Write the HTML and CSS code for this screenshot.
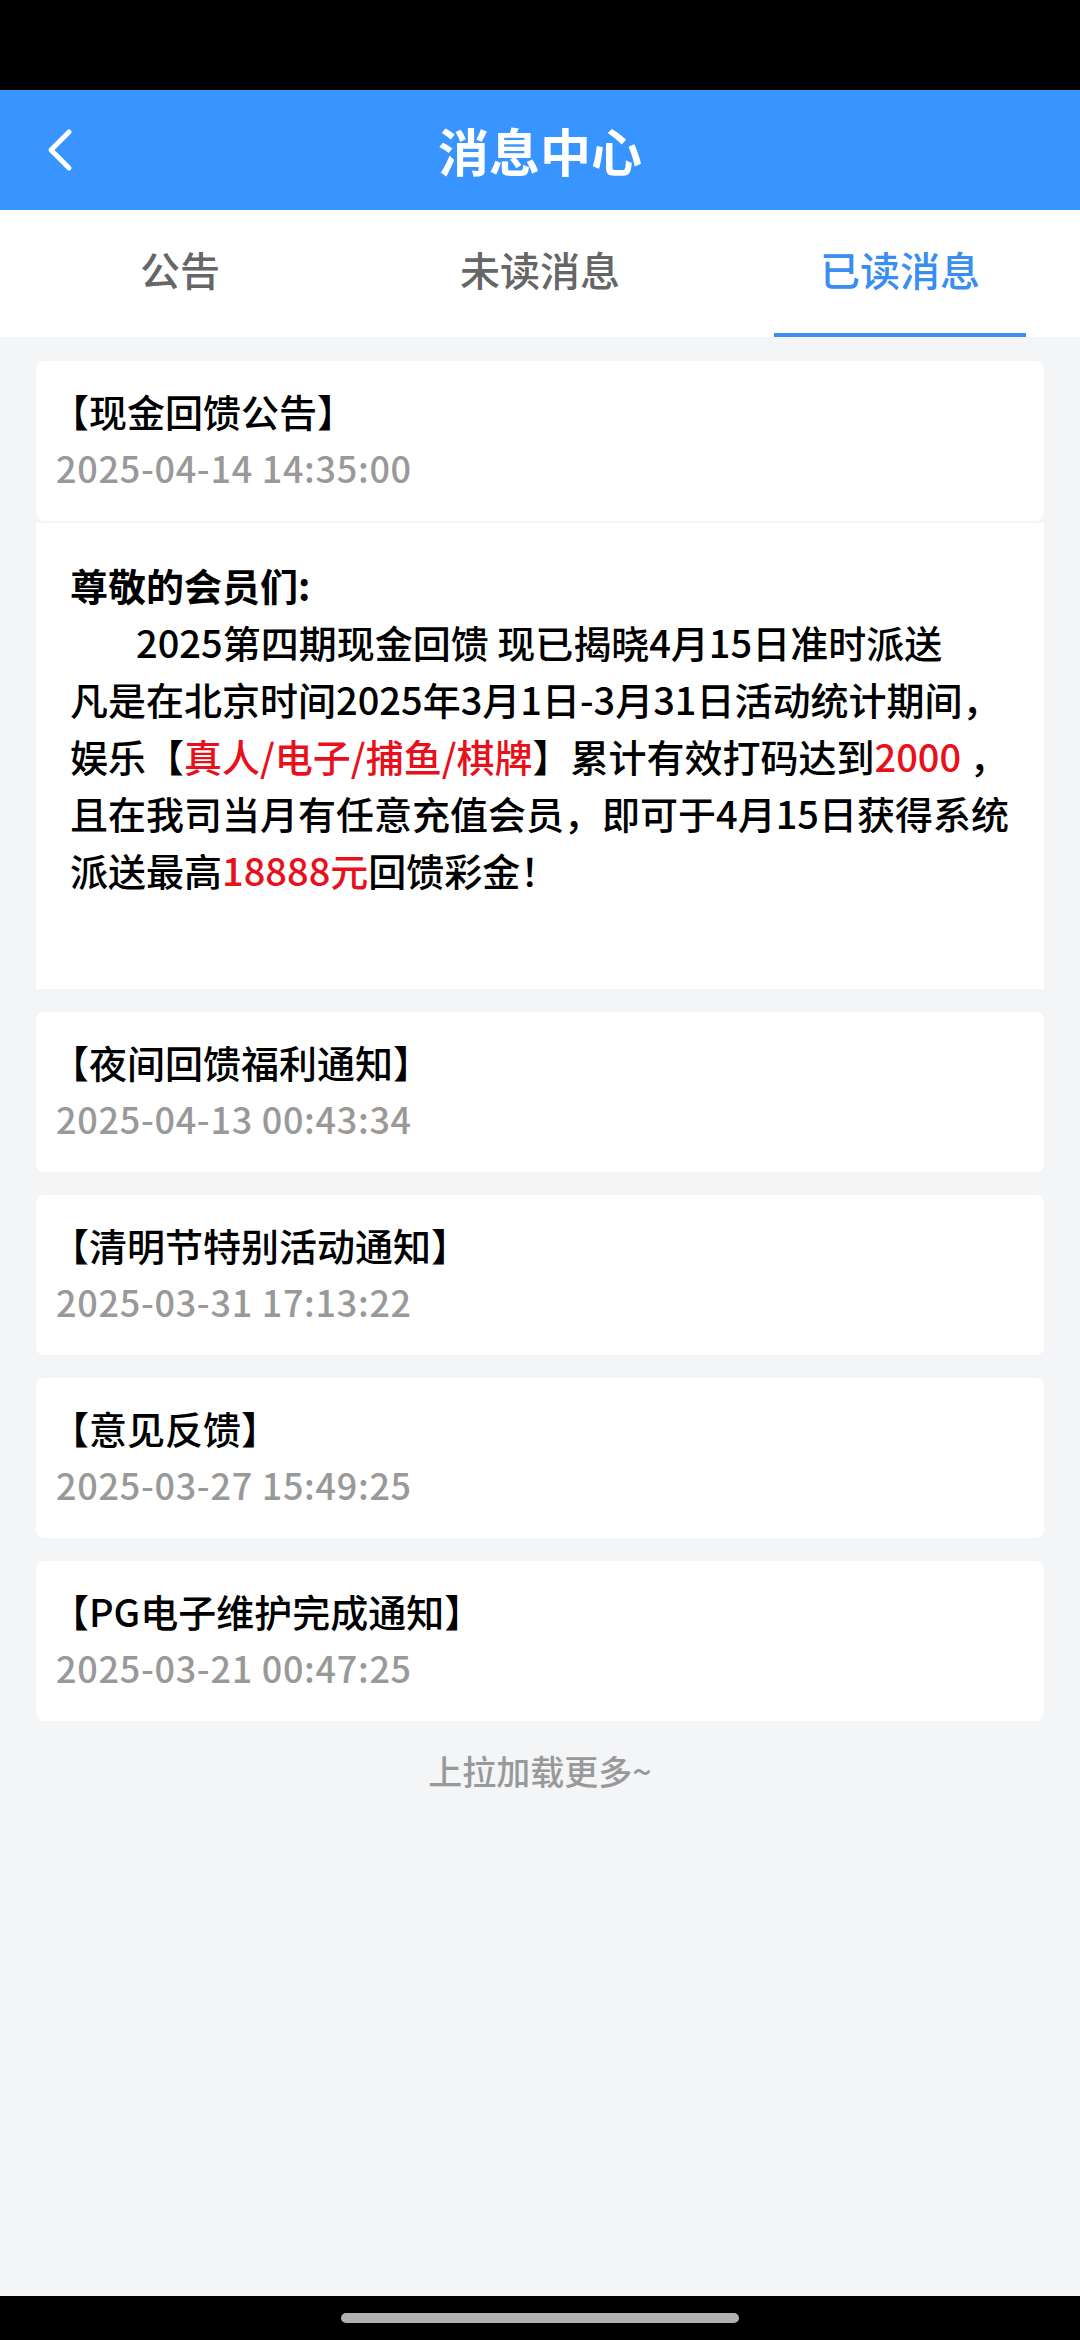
FILE: index.html
```html
<!DOCTYPE html>
<html lang="zh-CN">
<head>
<meta charset="utf-8">
<title>消息中心</title>
<link rel="stylesheet" href="styles.css">
</head>
<body>
<div class="page">
  <div class="statusbar"></div>
  <header class="header">
    <div class="back">
      <svg width="32" height="46" viewBox="0 0 32 46"><polyline points="25,5 7,23 25,41" fill="none" stroke="#ffffff" stroke-width="5" stroke-linecap="round" stroke-linejoin="round"/></svg>
    </div>
    <h1 class="title">消息中心</h1>
    <div class="spacer"></div>
  </header>
  <nav class="tabs">
    <div class="tab"><span class="tab-label">公告</span><span class="tab-line"></span></div>
    <div class="tab"><span class="tab-label">未读消息</span><span class="tab-line"></span></div>
    <div class="tab active"><span class="tab-label">已读消息</span><span class="tab-line"></span></div>
  </nav>
  <main class="list">
    <section class="card open">
      <div class="card-head">
        <div class="card-title">【现金回馈公告】</div>
        <div class="card-date">2025-04-14 14:35:00</div>
      </div>
      <div class="card-body">
        <div class="greet">尊敬的会员们:</div>
        <div class="line indent">2025第四期现金回馈 现已揭晓4月15日准时派送</div>
        <div class="line">凡是在北京时间2025年3月1日-3月31日活动统计期间，</div>
        <div class="line">娱乐【<span class="red">真人/电子/捕鱼/棋牌</span>】累计有效打码达到<span class="red">2000</span> ，</div>
        <div class="line">且在我司当月有任意充值会员，即可于4月15日获得系统</div>
        <div class="line">派送最高<span class="red">18888元</span>回馈彩金！</div>
      </div>
    </section>
    <section class="card">
      <div class="card-head">
        <div class="card-title">【夜间回馈福利通知】</div>
        <div class="card-date">2025-04-13 00:43:34</div>
      </div>
    </section>
    <section class="card">
      <div class="card-head">
        <div class="card-title">【清明节特别活动通知】</div>
        <div class="card-date">2025-03-31 17:13:22</div>
      </div>
    </section>
    <section class="card">
      <div class="card-head">
        <div class="card-title">【意见反馈】</div>
        <div class="card-date">2025-03-27 15:49:25</div>
      </div>
    </section>
    <section class="card">
      <div class="card-head">
        <div class="card-title">【PG电子维护完成通知】</div>
        <div class="card-date">2025-03-21 00:47:25</div>
      </div>
    </section>
    <div class="more">上拉加载更多~</div>
  </main>
  <div class="navbar"><span class="handle"></span></div>
</div>
</body>
</html>
```

FILE: styles.css
```css
* { box-sizing: border-box; }
html, body { margin: 0; padding: 0; }
body {
  width: 1080px;
  height: 2340px;
  background: #f4f5f7;
  font-family: "Noto Sans CJK SC", "Noto Sans", sans-serif;
  color: #000;
}
.page {
  height: 2340px;
  display: flex;
  flex-direction: column;
}
.statusbar {
  height: 90px;
  background: #000;
  flex: none;
}
.header {
  height: 120px;
  flex: none;
  background: #3894fe;
  display: grid;
  grid-template-columns: 1fr auto 1fr;
  align-items: center;
}
.back {
  padding-left: 44px;
  display: flex;
  align-items: center;
}
.back svg { display: block; }
.title {
  margin: 0;
  color: #fff;
  font-size: 51px;
  font-weight: 700;
  line-height: 60px;
}
.tabs {
  height: 127px;
  flex: none;
  background: #fff;
  display: grid;
  grid-template-columns: repeat(3, 1fr);
}
.tab {
  display: flex;
  flex-direction: column;
  align-items: center;
}
.tab-label {
  flex: 1;
  display: flex;
  align-items: center;
  padding-bottom: 6px;
  font-size: 40px;
  font-weight: 500;
  color: #666;
}
.tab-line {
  width: 252px;
  height: 4px;
  background: transparent;
}
.tab.active .tab-label { color: #3a8eef; }
.tab.active .tab-line { background: #3d8ef0; }
.list {
  flex: 1;
  padding: 24px 36px 0;
  display: flex;
  flex-direction: column;
  gap: 23px;
}
.card {
  display: flex;
  flex-direction: column;
  gap: 2px;
}
.card-head {
  background: #fff;
  border-radius: 8px;
  height: 160px;
  padding: 25px 20px 0;
}
.card-title {
  font-size: 38px;
  line-height: 50px;
  font-weight: 500;
  color: #000;
  white-space: nowrap;
  margin-left: -5px;
}
.card-date {
  margin-top: 11px;
  font-size: 36px;
  line-height: 40px;
  color: #999;
  font-weight: 500;
  letter-spacing: 0.7px;
}
.card-body {
  background: #fff;
  padding: 33px 34px 91px;
  font-size: 38px;
  line-height: 57px;
  font-weight: 500;
  color: #000;
}
.greet { font-weight: 700; }
.line { white-space: nowrap; }
.indent { text-indent: 66px; }
.red { color: #e8101a; }
.more {
  text-align: center;
  font-size: 34px;
  line-height: 60px;
  font-weight: 500;
  color: #999;
  margin-top: -3px;
}
.navbar {
  height: 44px;
  flex: none;
  background: #000;
  display: flex;
  justify-content: center;
  align-items: center;
}
.handle {
  width: 398px;
  height: 10px;
  border-radius: 5px;
  background: #b0b0b0;
}
```
